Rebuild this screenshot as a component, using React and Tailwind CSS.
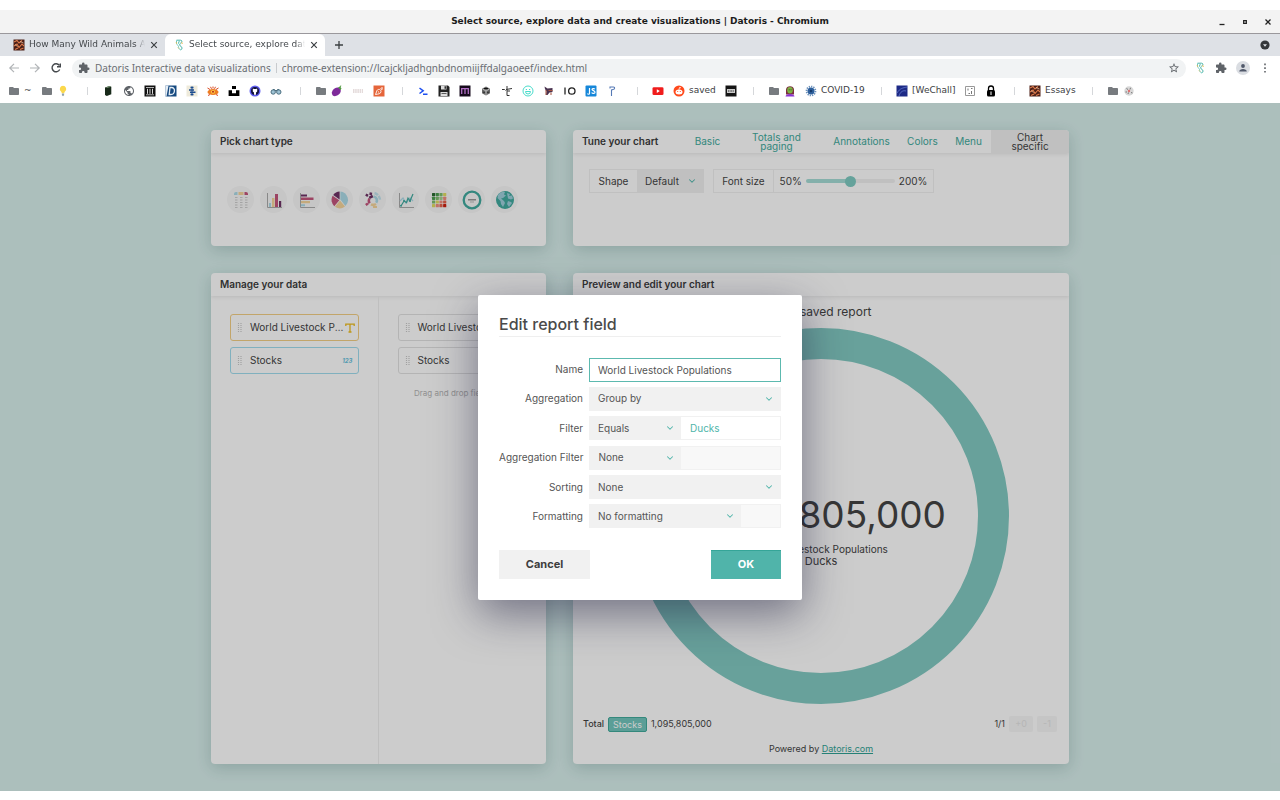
import React from "react";
import { ChevronDown } from "lucide-react";
import { MdExtension, MdFolder, MdPublic, MdStarBorder } from "react-icons/md";

/* ---------- small drawings ---------- */

const Svg = ({ box = 12, className = "size-3", children }) => (
  <svg viewBox={`0 0 ${box} ${box}`} className={`shrink-0 ${className}`} fill="none" aria-hidden="true">
    {children}
  </svg>
);

const Folder = () => <MdFolder className="size-3 shrink-0 text-[#777b7f]" aria-hidden="true" />;
const Bulb = () => (
  <Svg>
    <path d="M6 .8a3.200 3.200 0 0 0-2 5.700c.5.500.7 1 .7 1.700h2.600c0-.7.2-1.200.7-1.700A3.200 3.200 0 0 0 6 .8z" fill="#fbd84c" />
    <path d="M4.900 8.500h2.200v1.800L6 11.200l-1.100-.9z" fill="#8fa3ad" />
  </Svg>
);
const Tablet = () => (
  <Svg>
    <path d="M3 2.500 7.500 1l1.800.8v7.500L4.800 11 3 10z" fill="#182a1a" />
    <path d="M4.500 2.500 8.500 1.500" stroke="#7d9a78" />
  </Svg>
);
const Globe = () => <MdPublic className="size-3 shrink-0 text-[#5f6368]" aria-hidden="true" />;
const Archive = () => (
  <Svg>
    <path d="M.5.500h11v11H.5z" fill="#111" />
    <path d="M2 2.500h8M2 9.800h8" stroke="#ddd" strokeWidth=".8" />
    <path d="M3.500 3.800v5M6 3.800v5M8.500 3.800v5" stroke="#ddd" />
  </Svg>
);
const BlueD = () => (
  <Svg>
    <path d="M.5.500h11v11H.5z" fill="#174a80" />
    <path d="M.5 11.500V.5h3l-2 11z" fill="#e6eef5" />
    <path d="M5 2.500h1.500c4.500 0 3.500 7-.5 7H4.200z" stroke="#e6eef5" strokeWidth="1.300" />
  </Svg>
);
const BlueStack = () => (
  <Svg>
    <path d="M.5.500h11v11H.5z" fill="#eeeadb" />
    <path d="M4.500 2.500h3M3 5h5M4 7.300h5.500M4.500 9.500h3" stroke="#1d4c8f" strokeWidth="1.500" />
    <path d="M6 1.500v9" stroke="#1d4c8f" />
  </Svg>
);
const Eye = () => (
  <Svg>
    <ellipse cx="6" cy="7" rx="5.500" ry="3" fill="#ee7c21" />
    <path d="M.5 3l2.500 1.500M3.500 1.800l1 2M6 1.500v2M8.500 1.800l-1 2M11.500 3 9 4.500M1 10.500l2-1M11 10.500l-2-1" stroke="#d8481f" />
    <circle cx="6" cy="6.800" r="1.900" fill="#ffd84a" />
    <circle cx="6" cy="6.800" r="1" fill="#b3261e" />
  </Svg>
);
const Unsplash = () => (
  <Svg>
    <path d="M4 1h4v3H4zM.6 5.300H4v3h4v-3h3.400V11H.6z" fill="#000" />
  </Svg>
);
const Cat = () => (
  <Svg>
    <circle cx="6" cy="6" r="5.500" fill="#5f5df0" />
    <circle cx="6" cy="6" r="4" fill="#12123c" />
    <path d="M3.800 3.500 5 4h2l1.200-.5v3L7 7.500v2.300H5V7.500L3.800 6.500z" fill="#fff" />
  </Svg>
);
const Binoculars = () => (
  <Svg>
    <circle cx="3.200" cy="7" r="2.200" fill="#9fc4d6" stroke="#4c6f80" />
    <circle cx="8.800" cy="7" r="2.200" fill="#9fc4d6" stroke="#4c6f80" />
    <path d="M3 4.500h1.500L6 6l1.500-1.500H9" stroke="#4c6f80" />
  </Svg>
);
const Eggplant = () => (
  <Svg>
    <ellipse cx="5.300" cy="6.800" rx="5" ry="3.700" transform="rotate(-42 5.300 6.800)" fill="#7e2a9a" />
    <path d="M7 2.500 9.500 5l1-1.500L9.500 2l1-1.200-1-.3-1 1.300z" fill="#4f9a3f" />
  </Svg>
);
const FaintMark = () => (
  <Svg>
    <path d="M1 5h10M1 7h10" stroke="#c9b7b7" strokeDasharray="1.500 .7" />
  </Svg>
);
const Carrot = () => (
  <Svg>
    <path d="M.5.500h11v11H.5z" fill="#e5653a" />
    <path d="M2.500 9.500 4 5.500C5 3.800 8 4 8 6.500S5 9 2.500 9.500zM7.500 4l2-2M8 4.500l2-.8M5 6.500l1.200 1" stroke="#fff" strokeWidth=".9" />
  </Svg>
);
const Prompt = () => (
  <Svg>
    <path d="m2.500 3 3.700 2.800L2.500 8.500M6 9.300h4.500" stroke="#1d4ff0" strokeWidth="1.500" />
  </Svg>
);
const Floppy = () => (
  <Svg>
    <path d="M.5.500h9.500l1.500 1.500v9.500H.5z" fill="#222" />
    <path d="M3 .5h5.500v4H3zM2.500 7h7v4h-7z" fill="#ddd" />
    <path d="M6.500 1.200H8v2.500H6.500zM3.500 8.300h5v.7h-5z" fill="#333" />
  </Svg>
);
const LetterM = () => (
  <Svg>
    <path d="M.5.500h11v11H.5z" fill="#160a1c" />
    <path d="M2.700 9V3.700h6.600V9M6 4v5" stroke="#b06fc4" strokeWidth="1.300" />
  </Svg>
);
const Cube = () => (
  <Svg>
    <path d="m6 1.500 4 2.200v4.600l-4 2.200-4-2.200V3.700z" fill="#666" />
    <path d="m2.500 4 3.500 2 3.500-2M6 6v4" stroke="#ddd" strokeWidth=".7" />
    <path d="M4 3.500h4M3.500 7l1 .6M8.500 7l-1 .6" stroke="#111" strokeWidth="1.100" />
  </Svg>
);
const Scribble = () => (
  <Svg>
    <path d="M1 4.500h2.500l1 1M5 4.500l6-1M6 1v5.500M6 6h3M6 6.500v4h2.500" stroke="#333" />
  </Svg>
);
const Smile = () => (
  <Svg>
    <circle cx="6" cy="6" r="5" stroke="#49dccb" />
    <path d="M3.500 6.500h5a2.500 2.500 0 0 1-5 0z" stroke="#49dccb" />
    <path d="M3.800 4.500h1.200M7 4.500h1.200" stroke="#49dccb" />
  </Svg>
);
const Sprite = () => (
  <Svg>
    <path d="M1.500 1.500 4.500 3.500l5-.5v4L6.500 7.500 4.500 10H3l.5-3.500L2 4z" fill="#4a3350" />
    <path d="M5.500 5.500h4M3 5v5M8 7.500V10" stroke="#a5523f" />
  </Svg>
);
const InOut = () => (
  <Svg>
    <path d="M1 2.500v7" stroke="#222" strokeWidth="1.300" />
    <circle cx="7.800" cy="6" r="3.200" stroke="#222" strokeWidth="1.300" />
  </Svg>
);
const JsTile = () => (
  <Svg>
    <rect x=".5" y=".5" width="11" height="11" rx="1" fill="#1687d9" />
    <path d="M4.500 3v5.500c0 1-1.800 1-2 0M9.800 4.200c-.8-1-3-.7-2.700.5.200 1.200 2.900.8 2.900 2.500 0 1.500-2.700 1.500-3.300.3" stroke="#fff" strokeWidth="1.200" />
  </Svg>
);
const Pin = () => (
  <Svg>
    <path d="M4 3.500V2h3.500c1.500 0 1.500 2.500-.5 2.500L5.500 5v6" stroke="#5579b5" strokeWidth="1.100" />
  </Svg>
);
const YouTube = () => (
  <Svg>
    <rect x=".5" y="2.200" width="11" height="7.800" rx="1.300" fill="#f01c1c" />
    <path d="m4.800 4.300 3 1.800-3 1.800z" fill="#fff" />
  </Svg>
);
const Reddit = () => (
  <Svg>
    <circle cx="6" cy="6" r="5.500" fill="#ff4a1c" />
    <ellipse cx="6" cy="6.900" rx="3.500" ry="2.500" fill="#fff" />
    <path d="m6 4.500.5-2 1.500.3" stroke="#fff" strokeWidth=".8" />
    <circle cx="4.700" cy="6.500" r=".6" fill="#ff4a1c" />
    <circle cx="7.300" cy="6.500" r=".6" fill="#ff4a1c" />
  </Svg>
);
const Terminal = () => (
  <Svg>
    <path d="M.5.500h11v11H.5z" fill="#151515" />
    <path d="M2 4h8v4H2z" fill="#ccc" />
    <path d="M3 6h6" stroke="#222" strokeDasharray="1 .6" />
  </Svg>
);
const Zombie = () => (
  <Svg>
    <path d="M2 9.500V4.500C2 0 10 0 10 4.500v5z" fill="#7b2f3f" />
    <ellipse cx="6" cy="5.200" rx="2.800" ry="3.300" fill="#7cb342" />
    <path d="M1.500 11.500C1.500 8 10.500 8 10.500 11.500z" fill="#8a35d0" />
    <path d="M4.800 4.800h.7M6.700 4.800h.7" stroke="#222" />
  </Svg>
);
const Virus = () => (
  <Svg>
    <circle cx="6" cy="6" r="4.500" stroke="#6d93bd" strokeWidth="1.700" strokeDasharray="1.300 1" />
    <circle cx="6" cy="6" r="3.500" fill="#2d5f9c" />
    <circle cx="6" cy="6" r="1.300" fill="#153a6c" />
  </Svg>
);
const WeChall = () => (
  <Svg>
    <path d="M.5.500h11v11H.5z" fill="#1d2a86" />
    <path d="M1 8c3-5 6-5 10-6M3 11c1-4 4-6 7-5" stroke="#6b84d8" strokeWidth=".7" />
  </Svg>
);
const Dice = () => (
  <Svg>
    <path d="M1.500 1.500h9v9h-9z" stroke="#999" />
    <path d="M4 3.500v2M7 3.500h1.500M4.500 8.500H6M7.500 6v3" stroke="#777" />
  </Svg>
);
const Lock = () => (
  <Svg>
    <path d="M3.500 6V3.500a2.500 2.500 0 0 1 5 0V6" stroke="#000" strokeWidth="1.300" />
    <rect x="2" y="5" width="8" height="6.500" rx="1.500" fill="#000" />
    <path d="M6 6.500v3.500" stroke="#fff" />
  </Svg>
);
const Wildlife = () => (
  <Svg>
    <path d="M.5.500h11v11H.5z" fill="#4b1f17" />
    <path d="M1 3 4 1.500 6 4l3-2.500M1 7l3-2 2 3.500L9 5l2 2M2 10.500l3-1.500M7 10.500 10.500 9" stroke="#dd7b4c" strokeWidth="1.100" />
    <path d="M7 2.500 10.500 4M2 5.500 4.500 7.500" stroke="#f0cfae" strokeWidth=".7" />
  </Svg>
);
const Dial = () => (
  <Svg>
    <circle cx="6" cy="6" r="4.700" fill="#d8d8d8" />
    <path d="M3.500 3.500 5 4.500M7.500 2.800 7 4.500M2.500 7h1.500M8 7.500l1.500.5M5 9l.5-1.500" stroke="#777" />
    <circle cx="6" cy="6" r="1.200" fill="#e07070" />
  </Svg>
);
const Datoris = ({ className }) => (
  <Svg className={className}>
    <path d="M3.500 1.200h4c1.800 0 1.800 2 .2 2.800S6.500 7 8 7.500s1.200 2.800 0 3.300" stroke="#49b3a8" />
    <path d="M3.500 1.500v3c0 1.500 2 1.500 2 3s1 3.500 2.500 3.500M5.500 2.800h1.500M5.500 2.800v2" stroke="#6cc9bf" />
    <path d="M8.800 3.200 9.200 5M3.200 3.200l.5 1.500M5 8.500l1 1" stroke="#e8b84c" />
  </Svg>
);
const Puzzle = () => <MdExtension className="size-3 shrink-0 text-[#5f6368]" aria-hidden="true" />;

/* ---------- browser frame ---------- */

const Mark = ({ icon: Icon, children }) => (
  <a href="#" className="flex items-center gap-1" aria-label={children ? undefined : "Bookmark"}>
    <Icon />
    {children && <span>{children}</span>}
  </a>
);
const Sep = () => (
  <span className="flex w-3 shrink-0 justify-center">
    <span className="h-2 w-px bg-[#d5d7da]" />
  </span>
);
const group = "flex shrink-0 items-center gap-[9px]";

function Bookmarks() {
  return (
    <nav aria-label="Bookmarks" className="flex h-[23px] items-center overflow-hidden bg-white pb-0.5 pl-2 text-[9px] text-[#3c4043]">
      <div className={`${group} w-[73px]`}>
        <Mark icon={Folder}>~</Mark>
        <span className="flex gap-1"><Mark icon={Folder} /><Mark icon={Bulb} /></span>
      </div>
      <div className={`${group} w-[213px]`}>
        <Sep />
        {[Tablet, Globe, Archive, BlueD, BlueStack, Eye, Unsplash, Cat, Binoculars].map((I, i) => <Mark key={i} icon={I} />)}
      </div>
      <div className={`${group} w-[102px]`}>
        <Sep />
        <span className="flex gap-1"><Mark icon={Folder} /><Mark icon={Eggplant} /></span>
        <Mark icon={FaintMark} />
        <Mark icon={Carrot} />
      </div>
      <div className={`${group} w-[235px]`}>
        <Sep />
        {[Prompt, Floppy, LetterM, Cube, Scribble, Smile, Sprite, InOut, JsTile, Pin].map((I, i) => <Mark key={i} icon={I} />)}
      </div>
      <div className={`${group} w-[116px]`}>
        <Sep />
        <Mark icon={YouTube} />
        <Mark icon={Reddit}>saved</Mark>
        <Mark icon={Terminal} />
      </div>
      <div className={`${group} w-[128px]`}>
        <Sep />
        <span className="flex gap-1"><Mark icon={Folder} /><Mark icon={Zombie} /></span>
        <Mark icon={Virus}>COVID-19</Mark>
      </div>
      <div className={`${group} w-[133px]`}>
        <Sep />
        <Mark icon={WeChall}>[WeChall]</Mark>
        <Mark icon={Dice} />
        <Mark icon={Lock} />
      </div>
      <div className={`${group} w-[78px]`}>
        <Sep />
        <Mark icon={Wildlife}>Essays</Mark>
      </div>
      <div className={group}>
        <Sep />
        <span className="flex gap-1"><Mark icon={Folder} /><Mark icon={Dial} /></span>
      </div>
    </nav>
  );
}

const CloseX = () => (
  <Svg className="size-2.5" box={10}>
    <path d="m2.200 2.200 5.600 5.600M7.800 2.200 2.200 7.800" stroke="#3c4043" strokeWidth="1.200" />
  </Svg>
);

const Tab = ({ icon, active, children }) => (
  <div className={`flex h-[22px] w-[160px] items-center gap-1 ${active ? "rounded-t-md bg-white pr-1.5 pl-2" : "pr-px pl-[13px]"}`}>
    {icon}
    <span className="flex-1 overflow-hidden whitespace-nowrap mask-r-from-92% mask-r-to-100%">{children}</span>
    <button aria-label="Close tab"><CloseX /></button>
  </div>
);

function Browser() {
  return (
    <header className="font-['DejaVu_Sans',sans-serif]">
      <div className="mt-2.5 flex h-6 items-center border-b border-[#9a989c] bg-[#f3f3f3] px-[7px]">
        <div className="w-[60px]" />
        <h1 className="flex-1 text-center text-[9px] font-bold text-[#1c1c1c]">
          Select source, explore data and create visualizations | Datoris - Chromium
        </h1>
        <div className="flex w-[60px] justify-end gap-[13px]">
          <button aria-label="Minimize"><Svg className="size-2.5" box={10}><path d="M2.500 7.500h5" stroke="#222" strokeWidth="1.300" /></Svg></button>
          <button aria-label="Maximize"><Svg className="size-2.5" box={10}><path d="M3.700 3.700h2.600v2.600H3.700z" stroke="#222" strokeWidth="1.300" /></Svg></button>
          <button aria-label="Close"><Svg className="size-2.5" box={10}><path d="m2.500 2.500 5 5M7.500 2.500l-5 5" stroke="#222" strokeWidth="1.300" /></Svg></button>
        </div>
      </div>
      <div className="flex h-[22px] items-center bg-[#dee1e6] text-[9px] text-[#45494d]">
        <div className="flex">
          <div className="flex w-[165px]"><Tab icon={<Wildlife />}>How Many Wild Animals Are There?</Tab></div>
          <Tab active icon={<Datoris />}>Select source, explore data and</Tab>
        </div>
        <button aria-label="New tab" className="ml-2">
          <Svg><path d="M6 2v8M2 6h8" stroke="#3c4043" strokeWidth="1.300" /></Svg>
        </button>
        <button aria-label="Search tabs" className="mr-2.5 ml-auto">
          <Svg className="size-2.5" box={10}><circle cx="5" cy="5" r="4.600" fill="#35383b" /><path d="M3 4.200h4L5 6.700z" fill="#dee1e6" /></Svg>
        </button>
      </div>
      <div className="flex h-6 items-center bg-white pr-[9px] pl-2">
        <div className="flex w-16 gap-[9px]">
          <button aria-label="Back"><Svg><path d="M11 6H2M6 1.800 1.800 6 6 10.200" stroke="#b0b3b6" strokeWidth="1.200" /></Svg></button>
          <button aria-label="Forward"><Svg><path d="M1 6h9M6 1.800 10.200 6 6 10.200" stroke="#b0b3b6" strokeWidth="1.200" /></Svg></button>
          <button aria-label="Reload"><Svg><path d="M9.700 7.500A4 4 0 1 1 9.300 3.400M10.300 1.500v3.300H7" stroke="#45494d" strokeWidth="1.400" /></Svg></button>
        </div>
        <div className="flex h-[19px] flex-1 items-center gap-[5px] rounded-full bg-[#f1f3f4] px-1.5 text-[10px] text-[#6a6e73]">
          <Puzzle />
          <span className="font-['Noto_Sans',sans-serif] whitespace-nowrap">Datoris Interactive data visualizations</span>
          <span className="h-2.5 w-px bg-[#c8cbce]" />
          <label htmlFor="url" className="sr-only">Address</label>
          <input id="url" className="min-w-0 flex-1 bg-transparent font-['Noto_Sans',sans-serif] outline-none" defaultValue="chrome-extension://lcajckljadhgnbdnomiijffdalgaoeef/index.html" />
          <button aria-label="Bookmark this page">
            <MdStarBorder className="size-3 text-[#5f6368]" />
          </button>
        </div>
        <div className="ml-2 flex items-center gap-[9px]">
          <button aria-label="Datoris extension"><Datoris /></button>
          <button aria-label="Extensions"><Puzzle /></button>
          <button aria-label="Profile" className="flex size-3.5 items-center justify-center rounded-full bg-[#dadde2]">
            <Svg className="size-2.5" box={10}><circle cx="5" cy="3" r="1.900" fill="#50586a" /><path d="M1.200 8.500C1.200 5 8.800 5 8.800 8.500z" fill="#50586a" /></Svg>
          </button>
          <button aria-label="Menu"><Svg><path d="M6 1.500v1.700M6 5.200v1.700M6 8.900v1.700" stroke="#5f6368" strokeWidth="1.600" /></Svg></button>
        </div>
      </div>
      <Bookmarks />
    </header>
  );
}

/* ---------- chart type icons ---------- */

const TableIcon = () => (
  <Svg box={18} className="size-[18px]">
    <path d="M2 3a2 2 0 0 1 2-2h1.500v3H2z" fill="#addbe8" /><path d="M6.500 1h5v3h-5z" fill="#f5d59b" /><path d="M12.500 1H14a2 2 0 0 1 2 2v1h-3.500z" fill="#c4567c" />
    <path d="M3 6.500h2.500M3 9h2.500M3 11.500h2.500M3 14h2.500M3 16.500h2.500M8 6.500h2.500M8 9h2.500M8 11.500h2.500M8 14h2.500M8 16.500h2.500M13 6.500h2.500M13 9h2.500M13 11.500h2.500M13 14h2.500M13 16.500h2.500" stroke="#b0b0b0" strokeWidth=".6" />
  </Svg>
);
const Axis = () => <path d="M2.500 2v14.500H17" stroke="#aaa" />;
const BarsIcon = () => (
  <Svg box={18} className="size-[18px]"><Axis /><path d="M4 12h2v4H4z" fill="#addbe8" /><path d="M7 7h2.500v9H7z" fill="#f5d59b" /><path d="M10 3h3v13h-3z" fill="#c4567c" /><path d="M14 10h2.200v6H14z" fill="#6e3266" /></Svg>
);
const RowsIcon = () => (
  <Svg box={18} className="size-[18px]"><Axis /><path d="M3 3.500h6v2H3z" fill="#6e3266" /><path d="M3 6.500h12.500V9H3z" fill="#c4567c" /><path d="M3 10h9v2.200H3z" fill="#f5d59b" /><path d="M3 13.200h4v2H3z" fill="#addbe8" /></Svg>
);
const PieIcon = () => (
  <Svg box={18} className="size-[18px]">
    <path d="M9.400 8.500V.5a8.500 8.500 0 0 1 5 14.500z" fill="#addbe8" />
    <path d="m9 9.500 5 6a8.500 8.500 0 0 1-10 .2z" fill="#f5d59b" />
    <path d="m8.300 9.200-5 6A8.500 8.500 0 0 1 1.600 4.800z" fill="#c4567c" />
    <path d="M8.600 8.500V.5A8.500 8.500 0 0 0 2.200 4z" fill="#6e3266" />
  </Svg>
);
const SunburstIcon = () => (
  <Svg box={18} className="size-[18px]">
    <path d="M9.500 5.500a4 4 0 0 1 2.700 6.300" stroke="#addbe8" strokeWidth="2.600" />
    <path d="M10.500 2a7.500 7.500 0 0 1 5.500 7.500" stroke="#c3e4ee" strokeWidth="2.500" strokeDasharray="4 1" />
    <path d="M12 13a5 5 0 0 1-5 .3" stroke="#f5d59b" strokeWidth="2.600" /><path d="M9 16h4" stroke="#f5d59b" strokeWidth="2" />
    <path d="M5.500 12.300a5 5 0 0 1-.2-4.800M4 12.500 1.800 14" stroke="#c4567c" strokeWidth="2.600" />
    <path d="M5.200 6.800 8.800 5M4 4.800 1.800 3.500M6.500 4 7 1.500" stroke="#6e3266" strokeWidth="2.600" />
  </Svg>
);
const LineIcon = () => (
  <Svg box={18} className="size-[18px]"><Axis /><path d="m3 10 3-3 3 5 4-5 3 3" stroke="#addbe8" strokeWidth="1.300" /><path d="m4 15 3-5 2.500 1.500L11 7l2 3 3-7" stroke="#41aa9f" strokeWidth="1.200" /><circle cx="4" cy="14.800" r="1" fill="#41aa9f" /><circle cx="7" cy="10" r="1" fill="#41aa9f" /><circle cx="13" cy="10" r="1" fill="#41aa9f" /></Svg>
);
const heat = ["#2b6b32", "#4d9e50", "#7fbf6f", "#e2dc62", "#4d9e50", "#7fbf6f", "#a9cf8f", "#f08f80", "#7fbf6f", "#e2dc62", "#f08f80", "#e8634d", "#e2dc62", "#f08f80", "#e8634d", "#cf2010"];
const HeatIcon = () => (
  <Svg box={18} className="size-[18px]">
    {heat.map((c, i) => <rect key={i} x={2 + (i % 4) * 3.7} y={2 + Math.floor(i / 4) * 3.7} width="3.200" height="3.200" rx=".6" fill={c} />)}
  </Svg>
);
const GaugeIcon = () => (
  <Svg box={20} className="size-5"><circle cx="10" cy="10" r="8.300" stroke="#41aa9f" strokeWidth="2.300" /><path d="M6 9.700h8" stroke="#999" strokeWidth="1.400" /><path d="M8 12h4" stroke="#bbb" /></Svg>
);
const WorldIcon = () => (
  <Svg box={20} className="size-5"><circle cx="10" cy="10" r="9" fill="#41aa9f" /><path d="M3 5c2-3 5-3.500 7-3L9 4.500l2 1L8 8l-2 .5L9 11l1 2-2 4-2-3-.5-3-3-3zM12 3l3 1-1 2 3-.5 1 3-2 1-3-1zM13 11l3 1 1 1-3 4-2-3z" fill="#9fd0dc" /></Svg>
);
const chartTypes = [
  ["Table", TableIcon], ["Bar", BarsIcon], ["Row", RowsIcon], ["Pie", PieIcon], ["Sunburst", SunburstIcon],
  ["Line", LineIcon], ["Heatmap", HeatIcon], ["Gauge", GaugeIcon], ["Map", WorldIcon],
];

/* ---------- application ---------- */

const Card = ({ title, tools, children }) => (
  <section className="flex min-w-0 flex-col overflow-hidden rounded-[4px] bg-white shadow-[0_4px_16px_rgba(20,70,65,0.2)]">
    <div className="flex h-[23px] shrink-0 items-stretch justify-between shadow-[0_1px_4px_rgba(0,0,0,0.1)]">
      <h2 className="self-center pl-[9px] text-[10px] font-semibold text-[#3c3c3c]">{title}</h2>
      {tools}
    </div>
    {children}
  </section>
);

const Grip = () => (
  <Svg box={12} className="h-3 w-3">
    <path d="M4.500 1v10M7 1v10" stroke="#c9c9c9" strokeWidth="1.200" strokeDasharray="1 1" />
  </Svg>
);

const Field = ({ label, tone, mark }) => (
  <div className={`flex h-[27px] items-center rounded-[3px] border px-[3px] text-[10px] text-[#444] ${tone}`}>
    <Grip />
    <span className="flex-1 truncate pl-1">{label}</span>
    {mark}
  </div>
);
const TextMark = () => <Svg className="size-2.5" box={10}><path d="M.8 3V1.200h8.400V3M5 1.200v7.800M3.500 9h3" stroke="#eebd1f" strokeWidth="1.300" /></Svg>;
const NumberMark = () => <span className="pr-0.5 text-[6px] leading-none font-bold text-[#6cc3de] italic">123</span>;

const SelectBox = ({ id, options, className = "", label }) => (
  <div className={`relative flex ${className}`}>
    <select id={id} aria-label={label} className="h-full w-full appearance-none bg-[#f1f1f1] px-2 text-[10px] outline-none">
      {options.map((o) => <option key={o}>{o}</option>)}
    </select>
    <ChevronDown className="pointer-events-none absolute inset-y-0 right-1.5 my-auto size-2.5 text-[#4fb5aa]" strokeWidth={2.5} />
  </div>
);

const tuneTabs = [
  ["Basic", "w-[43px]"], ["Totals and paging", "w-[95px] px-5"], ["Annotations", "w-[75px]"], ["Colors", "w-[47px]"], ["Menu", "w-[45px]"],
];

function TuneTabs() {
  return (
    <div className="flex text-[10px] leading-[9px] text-[#41aa9c]">
      {tuneTabs.map(([t, w]) => <button key={t} className={w}>{t}</button>)}
      <button className="w-[78px] bg-[#f1f1f1] px-4 text-[#444]">Chart specific</button>
    </div>
  );
}

function TuneControls() {
  return (
    <div className="flex h-[93px] gap-[9px] px-4 py-4 text-[10px] text-[#444]">
      <div className="flex h-6 border border-[#f1f1f1]">
        <label htmlFor="shape" className="flex w-[47px] items-center justify-center">Shape</label>
        <SelectBox id="shape" className="w-[66px]" options={["Default"]} />
      </div>
      <div className="flex h-6 border border-[#f1f1f1]">
        <label htmlFor="fontsize" className="flex w-[60px] items-center justify-center border-r border-[#f1f1f1]">Font size</label>
        <div className="flex w-[159px] items-center justify-center gap-1">
          <span>50%</span>
          <input
            id="fontsize"
            type="range"
            min="0"
            max="100"
            defaultValue="50"
            className="h-1 w-[89px] appearance-none rounded-full bg-linear-to-r from-[#a5dcd6] from-50% to-[#f1f1f1] to-50% [&::-webkit-slider-thumb]:size-[11px] [&::-webkit-slider-thumb]:appearance-none [&::-webkit-slider-thumb]:rounded-full [&::-webkit-slider-thumb]:bg-[#7fcbc2]"
          />
          <span>200%</span>
        </div>
      </div>
    </div>
  );
}

function DataPanel() {
  return (
    <div className="grid flex-1 grid-cols-2">
      <div className="flex flex-col gap-1.5 border-r border-[#efefef] px-[19px] pt-[18px]">
        <Field label="World Livestock Populations" tone="border-[#f3cf85]" mark={<TextMark />} />
        <Field label="Stocks" tone="border-[#a0dcee]" mark={<NumberMark />} />
      </div>
      <div className="flex flex-col gap-1.5 px-[19px] pt-[18px]">
        <Field label="World Livestock Populations" tone="border-[#e2e2e2]" />
        <Field label="Stocks" tone="border-[#e2e2e2]" />
        <p className="mt-[7px] text-center text-[8px] whitespace-nowrap text-[#b5b5b5]">Drag and drop fields here</p>
      </div>
    </div>
  );
}

function Preview() {
  return (
    <div className="flex flex-1 flex-col items-center text-[#444]">
      <h3 className="mt-2 text-[12px] leading-4">Your saved report</h3>
      <div className="mt-2 flex size-[376px] flex-col items-center justify-center rounded-full border-[31px] border-[#83cac2] pt-[26px] text-center">
        <p className="text-[37px] leading-[48px] whitespace-nowrap">1,095,805,000</p>
        <p className="mt-1 text-[10px] leading-3">World Livestock Populations</p>
        <p className="text-[11px] leading-3">Ducks</p>
      </div>
      <div className="mt-3 flex h-4 items-center gap-1 self-stretch pr-3 pl-2.5 text-[9px]">
        <span className="font-medium">Total</span>
        <span className="rounded-[2px] border border-[#41aa9c] bg-[#72c6bd] px-1 leading-[13px] text-white">Stocks</span>
        <span>1,095,805,000</span>
        <span className="ml-auto">1/1</span>
        <button disabled className="h-4 w-6 rounded-[2px] bg-[#f7f7f7] text-[#e4e4e4]">+0</button>
        <button disabled className="h-4 w-5 rounded-[2px] bg-[#f7f7f7] text-[#e4e4e4]">-1</button>
      </div>
      <p className="mt-2.5 mb-2 text-[9px] leading-[14px]">
        Powered by <a href="#" className="text-[#30a294] underline">Datoris.com</a>
      </p>
    </div>
  );
}

const Row = ({ id, label, children }) => (
  <div className="flex h-6 items-center justify-between">
    <label htmlFor={id} className="flex-1 pr-1.5 text-right whitespace-nowrap">{label}</label>
    <div className="flex h-6 w-[192px] shrink-0 border border-[#f1f1f1]">{children}</div>
  </div>
);

function EditDialog() {
  return (
    <form
      role="dialog"
      aria-label="Edit report field"
      onSubmit={(e) => e.preventDefault()}
      className="w-[324px] rounded-[2px] bg-white px-[21px] pt-[18px] pb-[21px] text-[10px] text-[#555] shadow-[0_14px_44px_rgba(25,25,60,0.5)]"
    >
      <h2 className="border-b border-[#efefef] text-[16px] leading-[23px] font-medium text-[#4a4a4a]">Edit report field</h2>
      <div className="mt-[21px] flex h-[171px] flex-col justify-between">
        <div className="flex h-6 items-center">
          <label htmlFor="name" className="flex-1 pr-1.5 text-right">Name</label>
          <input id="name" defaultValue="World Livestock Populations" className="h-6 w-[192px] border border-[#5cb9af] px-2 outline-none" />
        </div>
        <Row id="agg" label="Aggregation"><SelectBox id="agg" className="flex-1" options={["Group by"]} /></Row>
        <Row id="filter" label="Filter">
          <SelectBox id="filter" className="w-[91px]" options={["Equals"]} />
          <input aria-label="Filter value" defaultValue="Ducks" className="min-w-0 flex-1 px-[9px] text-[#4fb5aa] outline-none" />
        </Row>
        <Row id="aggf" label="Aggregation Filter">
          <SelectBox id="aggf" className="w-[91px]" options={["None"]} />
          <input aria-label="Aggregation filter value" disabled className="min-w-0 flex-1 bg-[#f8f8f8]" />
        </Row>
        <Row id="sort" label="Sorting"><SelectBox id="sort" className="flex-1" options={["None"]} /></Row>
        <Row id="fmt" label="Formatting">
          <SelectBox id="fmt" className="w-[151px]" options={["No formatting"]} />
          <input aria-label="Format value" disabled className="min-w-0 flex-1 bg-[#f8f8f8]" />
        </Row>
      </div>
      <div className="mt-[21px] flex justify-between text-[11px] font-bold">
        <button type="button" className="h-[29px] w-[91px] bg-[#f1f1f1] text-[#3d3d3d]">Cancel</button>
        <button type="submit" className="h-[29px] w-[70px] border-t border-[#35a598] bg-[#50b4aa] text-white">OK</button>
      </div>
    </form>
  );
}

export default function App() {
  return (
    <div className="flex min-h-screen flex-col bg-white">
      <Browser />
      <main className="relative mb-[9px] flex-1 bg-[#d8efec] py-[27px] font-[Inter,sans-serif]">
        <div className="mx-auto grid max-w-[858px] grid-cols-[335fr_496fr] gap-[27px]">
          <Card title="Pick chart type">
            <div className="flex flex-1 items-center gap-1.5 pl-4">
              {chartTypes.map(([name, Icon]) => (
                <button key={name} aria-label={name} className="flex size-[27px] items-center justify-center rounded-full bg-[#f8f8f8]">
                  <Icon />
                </button>
              ))}
            </div>
          </Card>
          <Card title="Tune your chart" tools={<TuneTabs />}><TuneControls /></Card>
          <Card title="Manage your data"><DataPanel /></Card>
          <Card title="Preview and edit your chart"><Preview /></Card>
        </div>
        <div className="absolute inset-0 flex items-center justify-center bg-black/20">
          <EditDialog />
        </div>
      </main>
    </div>
  );
}
